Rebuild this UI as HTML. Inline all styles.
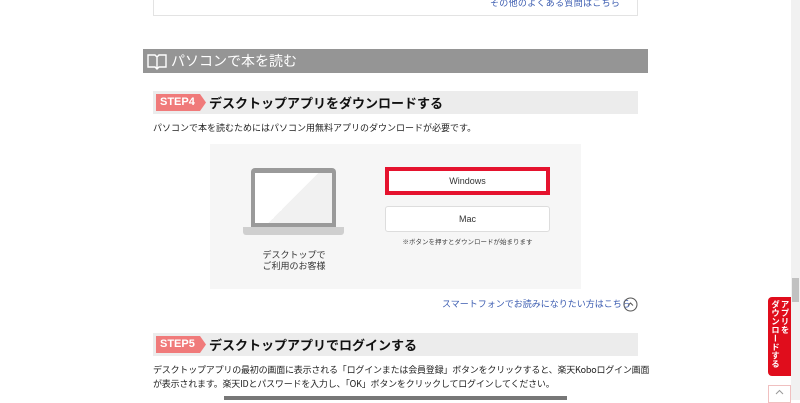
<!DOCTYPE html>
<html><head><meta charset="utf-8"><style>
*{margin:0;padding:0;box-sizing:border-box}
body{width:800px;height:400px;overflow:hidden;background:#fff;position:relative;font-family:"Liberation Sans","Noto Sans CJK JP",sans-serif;color:#222}
.a{position:absolute}
.jp{font-family:"Noto Sans CJK JP",sans-serif}
</style></head><body>
<div class="a" style="left:153px;top:-10px;width:485px;height:26px;border:1px solid #e3e3e3;border-top:none"></div>
<div class="a jp" style="left:490px;top:-4px;font-size:9px;color:#3a5bb0;letter-spacing:0.3px">その他のよくある質問はこちら</div>

<div class="a" style="left:143px;top:49px;width:505px;height:24px;background:#959595"></div>
<svg class="a" style="left:147px;top:53px" width="20" height="17" viewBox="0 0 20 17"><path d="M1 2h7l2 2 2-2h7v12h-7l-2 2-2-2H1z M10 4v12" fill="none" stroke="#fff" stroke-width="1.4"/></svg>
<div class="a jp" style="left:171px;top:51px;font-size:14px;color:#fff;line-height:20px">パソコンで本を読む</div>

<div class="a" style="left:153px;top:91px;width:485px;height:23px;background:#ececec"></div>
<div class="a" style="left:156px;top:94px;width:50px;height:17px;background:#f07a7a;clip-path:polygon(0 0,88% 0,100% 50%,88% 100%,0 100%)"></div>
<div class="a" style="left:160px;top:95px;font-size:11px;font-weight:bold;color:#fff;line-height:15px">STEP4</div>
<div class="a jp" style="left:209px;top:93px;font-size:13px;font-weight:bold;line-height:19px;color:#111">デスクトップアプリをダウンロードする</div>
<div class="a jp" style="left:153px;top:121px;font-size:9px;line-height:14px">パソコンで本を読むためにはパソコン用無料アプリのダウンロードが必要です。</div>

<div class="a" style="left:210px;top:144px;width:371px;height:145px;background:#f6f6f6"></div>
<div class="a" style="left:251px;top:168px;width:85px;height:59px;background:#9a9a9a;border-radius:4px 4px 0 0"></div>
<div class="a" style="left:255px;top:173px;width:77px;height:50px;background:linear-gradient(135deg,#fff 50%,#f1f1f1 50%)"></div>
<div class="a" style="left:243px;top:227px;width:101px;height:8px;background:#cfcfcf;border-radius:0 0 3px 3px"></div>
<div class="a jp" style="left:244px;top:249px;width:100px;text-align:center;font-size:9px;line-height:11px;color:#333">デスクトップで<br>ご利用のお客様</div>

<div class="a" style="left:385px;top:167px;width:165px;height:28px;border:4px solid #e5132e;background:#fff"></div>
<div class="a" style="left:385px;top:175px;width:165px;text-align:center;font-size:9px;line-height:12px;color:#333">Windows</div>
<div class="a" style="left:385px;top:206px;width:165px;height:26px;border:1px solid #ddd;border-radius:3px;background:#fff"></div>
<div class="a" style="left:385px;top:213px;width:165px;text-align:center;font-size:9px;line-height:12px;color:#333">Mac</div>
<div class="a jp" style="left:385px;top:236px;width:165px;text-align:center;font-size:6.5px;color:#444">※ボタンを押すとダウンロードが始まります</div>

<div class="a jp" style="left:442px;top:297px;font-size:9px;color:#3a5bb0;line-height:14px">スマートフォンでお読みになりたい方はこちら</div>
<svg class="a" style="left:623px;top:297px" width="15" height="15" viewBox="0 0 15 15"><circle cx="7.5" cy="7.5" r="6.5" fill="none" stroke="#555" stroke-width="1"/><path d="M5 8.5l2.5-2.5 2.5 2.5" fill="none" stroke="#555" stroke-width="1"/></svg>

<div class="a" style="left:153px;top:333px;width:485px;height:23px;background:#ececec"></div>
<div class="a" style="left:156px;top:336px;width:50px;height:17px;background:#f07a7a;clip-path:polygon(0 0,88% 0,100% 50%,88% 100%,0 100%)"></div>
<div class="a" style="left:160px;top:337px;font-size:11px;font-weight:bold;color:#fff;line-height:15px">STEP5</div>
<div class="a jp" style="left:209px;top:335px;font-size:13px;font-weight:bold;line-height:19px;color:#111">デスクトップアプリでログインする</div>
<div class="a jp" style="left:153px;top:363px;font-size:9px;line-height:14px;white-space:nowrap;letter-spacing:-0.2px">デスクトップアプリの最初の画面に表示される「ログインまたは会員登録」ボタンをクリックすると、楽天Koboログイン画面<br>が表示されます。楽天IDとパスワードを入力し、「OK」ボタンをクリックしてログインしてください。</div>
<div class="a" style="left:224px;top:396px;width:343px;height:4px;background:#777"></div>

<div class="a" style="left:791px;top:0;width:9px;height:400px;background:#f1f1f1"></div>
<div class="a" style="left:792px;top:278px;width:7px;height:24px;background:#c1c1c1"></div>
<div class="a" style="left:768px;top:297px;width:23px;height:79px;background:#e00d1c;border-radius:4px 0 0 4px"></div>
<div class="a jp" style="left:770px;top:300px;writing-mode:vertical-rl;font-size:8.5px;font-weight:bold;color:#fff;line-height:9.5px;height:76px;white-space:nowrap">アプリを<br>ダウンロードする</div>
<div class="a" style="left:768px;top:385px;width:23px;height:18px;border:1px solid #f0c0c0;background:#fff"></div>
<svg class="a" style="left:775px;top:389px" width="9" height="6" viewBox="0 0 9 6"><path d="M1 5l3.5-3.5L8 5" fill="none" stroke="#999" stroke-width="1"/></svg>
</body></html>
